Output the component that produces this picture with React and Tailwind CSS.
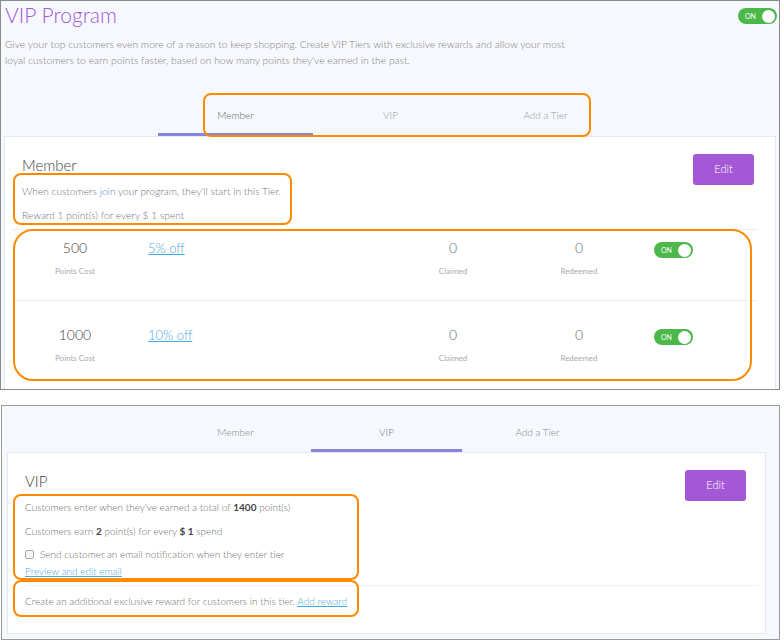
import React from 'react';

const font = { fontFamily: 'Lato, "Noto Sans", sans-serif' };

const Toggle = ({ className = '' }) => (
    <div className={`flex items-center justify-between w-[39px] h-[16px] rounded-full bg-[#4cb84a] pl-[7px] pr-[2px] ${className}`}>
        <span className="text-[7px] leading-none text-white">ON</span>
        <span className="w-[13px] h-[13px] rounded-full bg-white" />
    </div>
);

const Note = ({ className }) => (
    <div className={`absolute border-2 border-[#ff8a00] pointer-events-none ${className}`} />
);

const RewardRow = ({ cost, label, first }) => (
    <div className={`flex items-start ml-[7px] mr-[17px] ${first ? 'h-[71px] pt-[9px] border-b border-[#ececec]' : 'pt-[25px]'}`}>
        <div className="w-[126px] flex flex-col items-center">
            <span className="text-[14px] leading-[18px] font-light text-[#444]">{cost}</span>
            <span className="mt-[8px] text-[8px] leading-[12px] text-[#aaa]">Points Cost</span>
        </div>
        <a className="ml-[10px] w-[265px] text-[13px] leading-[18px] font-light text-[#4aa8e0] underline">{label}</a>
        <div className="w-[80px] flex flex-col items-center">
            <span className="text-[14px] leading-[18px] font-light text-[#667]">0</span>
            <span className="mt-[8px] text-[8px] leading-[12px] text-[#aaa]">Claimed</span>
        </div>
        <div className="w-[46px]" />
        <div className="w-[80px] flex flex-col items-center">
            <span className="text-[14px] leading-[18px] font-light text-[#667]">0</span>
            <span className="mt-[8px] text-[8px] leading-[12px] text-[#aaa]">Redeemed</span>
        </div>
        <Toggle className="ml-[35px] mt-[3px]" />
    </div>
);

const App = () => {
    return (
        <div className="w-[784px] h-[642px] bg-white flex flex-col" style={font}>
            {/* member tier screenshot */}
            <div className="relative w-[780px] h-[390px] border border-[#8c8c8c] bg-[#f5f8fd] overflow-hidden">
                <div className="flex justify-between items-start h-[32px] pl-[4px] pr-[2px]">
                    <h1 className="mt-[1px] text-[21px] leading-[26px] font-light text-[#a35bd8]">VIP Program</h1>
                    <Toggle className="mt-[7px]" />
                </div>
                <p className="mt-[3px] pl-[4px] text-[10.3px] leading-[16px] font-light text-[#8a8078]">
                    Give your top customers even more of a reason to keep shopping. Create VIP Tiers with exclusive rewards and allow your most<br />
                    loyal customers to earn points faster, based on how many points they've earned in the past.
                </p>
                <div className="flex mt-[28px] ml-[157px] text-[10px] font-light">
                    <div className="w-[155px] h-[40px] pt-[2px] flex items-center justify-center border-b-[3px] border-[#8884e0] text-[#666]">Member</div>
                    <div className="w-[155px] h-[40px] pt-[2px] flex items-center justify-center border-b-[3px] border-transparent text-[#999]">VIP</div>
                    <div className="w-[155px] h-[40px] pt-[2px] flex items-center justify-center border-b-[3px] border-transparent text-[#999]">Add a Tier</div>
                </div>
                <div className="ml-[3px] w-[772px] h-[300px] bg-white border border-[#e6e9ef]">
                    <div className="flex justify-between items-start pt-[17px] pl-[17px] pr-[21px]">
                        <div className="flex flex-col">
                            <h2 className="mt-[1px] text-[15px] leading-[20px] font-light text-[#444]">Member</h2>
                            <p className="mt-[8px] text-[10.2px] leading-[16px] font-light text-[#6e7380]">
                                When customers <span className="text-[#4d86c6]">join</span> your program, they'll start in this Tier.
                            </p>
                            <p className="mt-[8px] text-[10.2px] leading-[16px] font-light text-[#6e7380]">Reward 1 point(s) for every $ 1 spent</p>
                        </div>
                        <button className="w-[61px] h-[31px] rounded-[3px] bg-[#a558d6] text-white text-[11px] font-light">Edit</button>
                    </div>
                    <div className="mt-[6px] ml-[7px] mr-[17px] border-t border-[#ececec]" />
                    <RewardRow cost="500" label="5% off" first />
                    <RewardRow cost="1000" label="10% off" />
                </div>
                <Note className="left-[202px] top-[92px] w-[388px] h-[44px] rounded-[8px]" />
                <Note className="left-[12px] top-[172px] w-[279px] h-[52px] rounded-[8px]" />
                <Note className="left-[12px] top-[228px] w-[739px] h-[152px] rounded-[20px]" />
            </div>

            {/* vip tier screenshot */}
            <div className="relative mt-[15px] ml-[1px] w-[779px] h-[235px] border border-[#9a9a9a] bg-[#f5f8fd]">
                <div className="flex ml-[158px] text-[10px] font-light">
                    <div className="w-[151px] h-[46px] pt-[18px] text-center leading-[16px] border-b-[3px] border-transparent text-[#888]">Member</div>
                    <div className="w-[151px] h-[46px] pt-[18px] text-center leading-[16px] border-b-[3px] border-[#8884e0] text-[#777]">VIP</div>
                    <div className="w-[151px] h-[46px] pt-[18px] text-center leading-[16px] border-b-[3px] border-transparent text-[#888]">Add a Tier</div>
                </div>
                <div className="ml-[5px] w-[759px] h-[182px] bg-white border border-[#e6e9ef]">
                    <div className="flex justify-between items-start pt-[17px] pl-[17px] pr-[19px]">
                        <div className="flex flex-col text-[10px] leading-[16px] font-light text-[#707070]">
                            <h2 className="mt-[1px] text-[15px] leading-[20px] text-[#444]">VIP</h2>
                            <p className="mt-[8px]">Customers enter when they've earned a total of <b className="font-bold text-[#444]">1400</b> point(s)</p>
                            <p className="mt-[8px]">Customers earn <b className="font-bold text-[#444]">2</b> point(s) for every <b className="font-bold text-[#444]">$ 1</b> spend</p>
                            <label className="mt-[7px] flex items-center gap-[6px]">
                                <span className="w-[9px] h-[9px] border border-[#aaa] rounded-[2px] bg-[#f4f4f4]" />
                                Send customer an email notification when they enter tier
                            </label>
                            <a className="mt-[1px] text-[#4aa8e0] underline">Preview and edit email</a>
                        </div>
                        <button className="w-[61px] h-[31px] rounded-[3px] bg-[#a558d6] text-white text-[11px] font-light">Edit</button>
                    </div>
                    <div className="mt-[6px] ml-[17px] mr-[6px] border-t border-[#f0f0f0]" />
                    <p className="pt-[7px] pl-[17px] text-[10px] leading-[16px] font-light text-[#707070]">
                        Create an additional exclusive reward for customers in this tier. <a className="text-[#4aa8e0] underline">Add reward</a>
                    </p>
                </div>
                <Note className="left-[11px] top-[88px] w-[346px] h-[86px] rounded-[8px]" />
                <Note className="left-[11px] top-[174px] w-[346px] h-[37px] rounded-[8px]" />
            </div>
        </div>
    );
};

export default App;
